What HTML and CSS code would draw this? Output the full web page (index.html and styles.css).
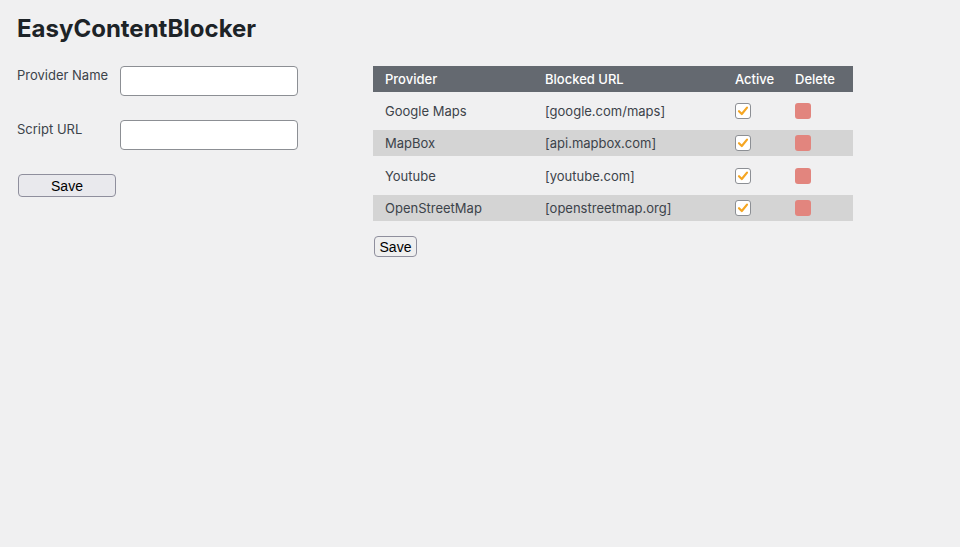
FILE: index.html
```html
<!DOCTYPE html>
<html>
<head>
<meta charset="utf-8">
<link rel="stylesheet" href="styles.css">
</head>
<body>
<div class="wrap">
  <h1 class="title">EasyContentBlocker</h1>
  <div class="main">
    <form class="form">
      <div class="field">
        <label class="label">Provider Name</label>
        <input class="input" type="text">
      </div>
      <div class="field">
        <label class="label">Script URL</label>
        <input class="input" type="text">
      </div>
      <button type="button" class="btn btn-wide">Save</button>
    </form>
    <div class="list">
      <table class="table">
        <thead>
          <tr><th class="c1">Provider</th><th class="c2">Blocked URL</th><th class="c3">Active</th><th class="c4">Delete</th></tr>
        </thead>
        <tbody>
          <tr class="odd"><td>Google Maps</td><td>[google.com/maps]</td><td><span class="check"><svg viewBox="0 0 16 16" width="16" height="16"><path d="M4 8.2 L6.8 11 L12 4.6" fill="none" stroke="#f5a623" stroke-width="2.2" stroke-linecap="round" stroke-linejoin="round"/></svg></span></td><td><span class="del"></span></td></tr>
          <tr class="even"><td>MapBox</td><td>[api.mapbox.com]</td><td><span class="check"><svg viewBox="0 0 16 16" width="16" height="16"><path d="M4 8.2 L6.8 11 L12 4.6" fill="none" stroke="#f5a623" stroke-width="2.2" stroke-linecap="round" stroke-linejoin="round"/></svg></span></td><td><span class="del"></span></td></tr>
          <tr class="odd tall"><td>Youtube</td><td>[youtube.com]</td><td><span class="check"><svg viewBox="0 0 16 16" width="16" height="16"><path d="M4 8.2 L6.8 11 L12 4.6" fill="none" stroke="#f5a623" stroke-width="2.2" stroke-linecap="round" stroke-linejoin="round"/></svg></span></td><td><span class="del"></span></td></tr>
          <tr class="even"><td>OpenStreetMap</td><td>[openstreetmap.org]</td><td><span class="check"><svg viewBox="0 0 16 16" width="16" height="16"><path d="M4 8.2 L6.8 11 L12 4.6" fill="none" stroke="#f5a623" stroke-width="2.2" stroke-linecap="round" stroke-linejoin="round"/></svg></span></td><td><span class="del"></span></td></tr>
        </tbody>
      </table>
      <button type="button" class="btn btn-small">Save</button>
    </div>
  </div>
</div>
</body>
</html>
```
FILE: styles.css
```css
html, body {
  margin: 0;
  padding: 0;
  background: #f0f0f1;
}
body {
  font-family: Inter, "Liberation Sans", Arial, sans-serif;
  font-size: 13px;
  color: #3c434a;
}
.wrap {
  padding: 14px 0 0 17px;
}
.title {
  margin: 0;
  font-size: 24px;
  font-weight: 700;
  color: #1d2327;
  line-height: 29px;
}
.main {
  display: flex;
  margin-top: 23px;
}
.form {
  width: 356px;
  display: flex;
  flex-direction: column;
  align-items: flex-start;
}
.field {
  display: flex;
  align-items: flex-start;
  margin-bottom: 24px;
}
.label {
  width: 103px;
  padding-top: 3px;
  line-height: 13px;
}
.input {
  width: 178px;
  height: 30px;
  box-sizing: border-box;
  margin: 0;
  border: 1px solid #8c8f94;
  border-radius: 4px;
  background: #fff;
}
.btn {
  font-family: "Liberation Sans", Arial, sans-serif;
  font-size: 14px;
  color: #000;
  background: #e9e9ed;
  border: 1px solid #8f8f9d;
  border-radius: 4px;
  box-sizing: border-box;
  margin: 0;
  padding: 0;
}
.btn-wide {
  width: 98px;
  height: 23px;
  margin-left: 1px;
}
.btn-small {
  width: 43px;
  height: 21px;
  margin-top: 15px;
  margin-left: 1px;
  background: #efefef;
}
.list {
  display: flex;
  flex-direction: column;
  align-items: flex-start;
}
.table {
  width: 480px;
  table-layout: fixed;
  border-collapse: collapse;
  border-spacing: 0;
}
.table th {
  background: #646970;
  color: #fff;
  font-weight: 500;
  text-align: left;
  height: 26px;
  padding: 0 12px;
  box-sizing: border-box;
}
.table td {
  padding: 0 12px;
  vertical-align: middle;
}
.c1 { width: 160px; }
.c2 { width: 190px; }
.c3 { width: 60px; }
.c4 { width: 70px; }
.odd td { height: 38px; }
.tall td { height: 39px; }
.even td { height: 26px; background: #d4d4d4; }
.check {
  display: block;
  width: 16px;
  height: 16px;
  box-sizing: border-box;
  border: 1px solid #8c8f94;
  border-radius: 3px;
  background: #fff;
  position: relative;
}
.check svg {
  position: absolute;
  left: -1px;
  top: -1px;
}
.del {
  display: block;
  width: 16px;
  height: 16px;
  border-radius: 3px;
  background: #e2857e;
}
```
